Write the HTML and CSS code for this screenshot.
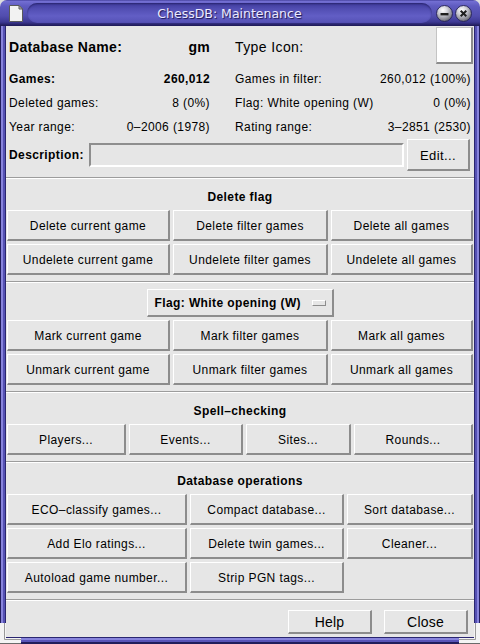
FILE: index.html
```html
<!DOCTYPE html>
<html>
<head>
<meta charset="utf-8">
<title>ChessDB: Maintenance</title>
<link rel="stylesheet" href="styles.css">
</head>
<body>
<div class="window">
  <div class="titlebar">
    <svg class="winicon" width="16" height="19" viewBox="0 0 16 19">
      <path d="M1.5 1.5 H11 L14.5 5 V17.5 H1.5 Z" fill="#f2f2f2" stroke="#5a5a5a"/>
      <path d="M11 1.5 V5 H14.5 Z" fill="#bdbdbd" stroke="#5a5a5a"/>
    </svg>
    <div class="pill"><span class="title">ChessDB: Maintenance</span></div>
    <svg class="tbtn" width="17" height="17" viewBox="0 0 17 17">
      <defs>
        <radialGradient id="gm" cx="40%" cy="30%" r="75%">
          <stop offset="0" stop-color="#ffffff"/>
          <stop offset="0.35" stop-color="#d4d4dc"/>
          <stop offset="0.8" stop-color="#85858f"/>
          <stop offset="1" stop-color="#55555f"/>
        </radialGradient>
      </defs>
      <circle cx="8.5" cy="8.5" r="8" fill="url(#gm)" stroke="#2a2760" stroke-width="1"/>
      <rect x="4.5" y="8" width="8" height="2.4" fill="#1e1e1e"/>
    </svg>
    <svg class="tbtn tclose" width="17" height="17" viewBox="0 0 17 17">
      <defs>
        <radialGradient id="gc" cx="40%" cy="30%" r="75%">
          <stop offset="0" stop-color="#ffffff"/>
          <stop offset="0.35" stop-color="#d4d4dc"/>
          <stop offset="0.8" stop-color="#85858f"/>
          <stop offset="1" stop-color="#55555f"/>
        </radialGradient>
      </defs>
      <circle cx="8.5" cy="8.5" r="8" fill="url(#gc)" stroke="#2a2760" stroke-width="1"/>
      <path d="M5.7 5.7 L11.3 11.3 M11.3 5.7 L5.7 11.3" stroke="#1e1e1e" stroke-width="2"/>
    </svg>
  </div>

  <div class="frame">
    <div class="content">
      <div class="info">
        <div class="cell r1"><span class="big">Database Name:</span><span class="big">gm</span></div>
        <div class="cell r1"><span class="bigr">Type Icon:</span><span class="typeicon"></span></div>
        <div class="cell"><b>Games:</b><b>260,012</b></div>
        <div class="cell"><span>Games in filter:</span><span>260,012 (100%)</span></div>
        <div class="cell"><span>Deleted games:</span><span>8 (0%)</span></div>
        <div class="cell"><span>Flag: White opening (W)</span><span>0 (0%)</span></div>
        <div class="cell"><span>Year range:</span><span>0–2006 (1978)</span></div>
        <div class="cell"><span>Rating range:</span><span>3–2851 (2530)</span></div>
      </div>
      <div class="desc">
        <b>Description:</b>
        <div class="entry"></div>
        <div class="btn edit">Edit...</div>
      </div>

      <div class="sep"></div>
      <div class="sect">
        <div class="head">Delete flag</div>
        <div class="grid g3a">
          <div class="btn">Delete current game</div>
          <div class="btn">Delete filter games</div>
          <div class="btn">Delete all games</div>
          <div class="btn">Undelete current game</div>
          <div class="btn">Undelete filter games</div>
          <div class="btn">Undelete all games</div>
        </div>
      </div>

      <div class="sep"></div>
      <div class="sect flagsect">
        <div class="btn menubtn"><span>Flag: White opening (W)</span><span class="ind"></span></div>
        <div class="grid g3a">
          <div class="btn">Mark current game</div>
          <div class="btn">Mark filter games</div>
          <div class="btn">Mark all games</div>
          <div class="btn">Unmark current game</div>
          <div class="btn">Unmark filter games</div>
          <div class="btn">Unmark all games</div>
        </div>
      </div>

      <div class="sep"></div>
      <div class="sect">
        <div class="head">Spell–checking</div>
        <div class="grid g4">
          <div class="btn">Players...</div>
          <div class="btn">Events...</div>
          <div class="btn">Sites...</div>
          <div class="btn">Rounds...</div>
        </div>
      </div>

      <div class="sep"></div>
      <div class="sect">
        <div class="head">Database operations</div>
        <div class="grid g3b">
          <div class="btn">ECO–classify games...</div>
          <div class="btn">Compact database...</div>
          <div class="btn">Sort database...</div>
          <div class="btn">Add Elo ratings...</div>
          <div class="btn">Delete twin games...</div>
          <div class="btn">Cleaner...</div>
          <div class="btn">Autoload game number...</div>
          <div class="btn">Strip PGN tags...</div>
        </div>
      </div>

      <div class="sep"></div>
      <div class="bottom">
        <div class="btn big-btn">Help</div>
        <div class="btn big-btn">Close</div>
      </div>
    </div>
  </div>

  <svg class="grip grip-l" width="21" height="21" viewBox="0 0 21 21">
    <path d="M0 0 H6 V15 H21 V21 H0 Z" fill="#f4f4f4"/>
    <path d="M4.5 0 V16.5 H21" fill="none" stroke="#9a9a9a" stroke-width="1"/>
    <path d="M0 20.5 H21" stroke="#6a6a6a" stroke-width="1"/>
  </svg>
  <svg class="grip grip-r" width="21" height="21" viewBox="0 0 21 21">
    <path d="M21 0 H15 V15 H0 V21 H21 Z" fill="#f4f4f4"/>
    <path d="M16.5 0 V16.5 H0" fill="none" stroke="#9a9a9a" stroke-width="1"/>
    <path d="M0 20.5 H21" stroke="#6a6a6a" stroke-width="1"/>
  </svg>
</div>
</body>
</html>
```

FILE: styles.css
```css
html, body {
  margin: 0;
  padding: 0;
}

body {
  width: 480px;
  height: 644px;
  overflow: hidden;
  background: #dedede;
  font-family: "Liberation Sans", Arial, sans-serif;
  font-size: 12px;
  color: #000;
}

.window {
  position: relative;
  width: 480px;
  height: 644px;
  display: flex;
  flex-direction: column;
}

/* ---------- title bar ---------- */
.titlebar {
  flex: none;
  height: 26px;
  display: flex;
  align-items: center;
  border-radius: 7px 7px 0 0;
  background: linear-gradient(to bottom,
    #37338e 0px, #7470d4 1px, #5f5bc0 6px, #514dae 16px,
    #3d3994 22px, #241f62 25px, #1e1a55 26px);
}

.winicon {
  flex: none;
  margin-left: 8px;
}

.pill {
  flex: 1;
  height: 20px;
  margin: 0 4px 0 3px;
  border-radius: 10px;
  background: linear-gradient(to bottom, #3f3b9c 0%, #524eb3 30%, #625ec5 65%, #5551b5 100%);
  box-shadow: inset 0 1px 2px rgba(20, 16, 70, 0.55);
  display: flex;
  align-items: center;
  justify-content: center;
}

.title {
  font-family: "DejaVu Sans", "Liberation Sans", sans-serif;
  font-size: 12.5px;
  color: #eceaff;
  text-shadow: 1px 1px 1px #1a1650;
}

.tbtn {
  flex: none;
}

.tclose {
  margin-left: 2px;
  margin-right: 8px;
}

/* ---------- frame ---------- */
.frame {
  flex: 1;
  display: flex;
  padding: 0 6px 7px 6px;
  background: #2a2670;
  box-shadow:
    inset 1px 0 #221e5c, inset 3px 0 #8884dc, inset 5px 0 #5551b3, inset 6px 0 #2a2670,
    inset -1px 0 #221e5c, inset -3px 0 #8884dc, inset -5px 0 #5551b3, inset -6px 0 #2a2670,
    inset 0 -2px #221e5c, inset 0 -4px #5955b8, inset 0 -6px #8884dc, inset 0 -7px #2a2670;
}

.content {
  flex: 1;
  background: #e6e6e6;
  display: flex;
  flex-direction: column;
  letter-spacing: 0.4px;
}

/* ---------- info grid ---------- */
.info {
  display: grid;
  grid-template-columns: 201px 236px;
  column-gap: 25px;
  padding: 0 3px;
}

.cell {
  height: 24px;
  display: flex;
  align-items: center;
  justify-content: space-between;
  white-space: nowrap;
}

.cell.r1 {
  height: 41px;
}

.big {
  font-size: 14px;
  font-weight: bold;
  letter-spacing: 0.3px;
}

.bigr {
  font-size: 14px;
}

.typeicon {
  align-self: flex-start;
  width: 34px;
  height: 34px;
  margin-top: 1px;
  margin-right: -2px;
  background: #fff;
  border-top: 1px solid #c4c4c4;
  border-left: 1px solid #c4c4c4;
  border-right: 2px solid #8c8c8c;
  border-bottom: 2px solid #8c8c8c;
}

.desc {
  height: 32px;
  display: flex;
  align-items: center;
  padding: 0 4px 0 3px;
  margin-bottom: 6px;
}

.entry {
  flex: 1;
  height: 20px;
  margin-left: 5px;
  border: 2px solid;
  border-color: #8e8e8e #ffffff #ffffff #8e8e8e;
}

/* ---------- buttons ---------- */
.btn {
  box-sizing: border-box;
  display: flex;
  align-items: center;
  justify-content: center;
  white-space: nowrap;
  padding-top: 1px;
  background: #e6e6e6;
  border-style: solid;
  border-width: 1px 2px 2px 1px;
  border-color: #ffffff #8c8c8c #8c8c8c #ffffff;
}

.edit {
  flex: none;
  width: 63px;
  height: 32px;
  margin-left: 3px;
  font-size: 13px;
}

.sep {
  flex: none;
  border-top: 1px solid #9c9c9c;
  border-bottom: 1px solid #ffffff;
}

.sect {
  display: flex;
  flex-direction: column;
  padding: 10px 1px 6px;
}

.head {
  font-weight: bold;
  line-height: 16px;
  text-align: center;
  margin-bottom: 5px;
}

.grid {
  display: grid;
  gap: 3px;
  grid-auto-rows: 31px;
}

.g3a {
  grid-template-columns: 163px 155px 1fr;
}

.g4 {
  grid-template-columns: 119px 114px 105px 1fr;
}

.g3b {
  grid-template-columns: 180px 154px 1fr;
}

.flagsect {
  padding-top: 6px;
}

.menubtn {
  align-self: center;
  width: 187px;
  height: 28px;
  margin-bottom: 3px;
  padding: 1px 6px 0 7px;
  justify-content: space-between;
  font-weight: bold;
}

.ind {
  box-sizing: border-box;
  width: 14px;
  height: 6px;
  background: #e6e6e6;
  border: 1px solid;
  border-color: #ffffff #8c8c8c #8c8c8c #ffffff;
}

.bottom {
  display: flex;
  justify-content: flex-end;
  gap: 12px;
  padding: 9px 6px 0 0;
}

.big-btn {
  width: 84px;
  height: 24px;
  font-size: 14px;
  letter-spacing: 0.2px;
}

/* ---------- resize grips (overlay the frame) ---------- */
.grip {
  position: absolute;
  bottom: 0;
}

.grip-l {
  left: 0;
}

.grip-r {
  right: 0;
}
```
